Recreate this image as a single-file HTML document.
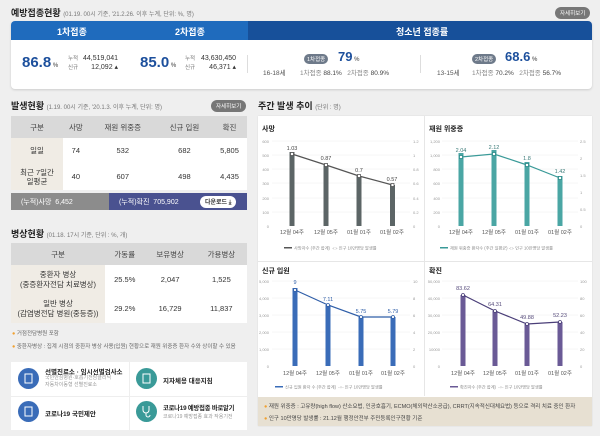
<!DOCTYPE html><html><head><meta charset="utf-8"><style>
*{margin:0;padding:0;box-sizing:border-box}
body{width:600px;height:436px;background:#efefef;font-family:"Liberation Sans","Noto Sans CJK KR",sans-serif;position:relative;overflow:hidden;color:#333}
.a{position:absolute;white-space:nowrap}
.t{font-weight:bold;font-size:9px;color:#222}
.s{font-size:6px;color:#777;font-weight:normal}
.btn{background:#777;color:#fff;font-size:5.5px;border-radius:6px;padding:2px 5px}
table{border-collapse:collapse;position:absolute;font-size:7.5px;text-align:center}
td{padding:0}
</style></head><body>
<div class="a t" style="left:11px;top:6px">예방접종현황 <span class="s">(01.19. 00시 기준, '21.2.26. 이후 누계, 단위: %, 명)</span></div>
<div class="a btn" style="left:555px;top:7px">자세히보기</div>
<div class="a" style="left:11px;top:21px;width:581px;height:68px;background:#fff;border-radius:4px;box-shadow:0 1px 2px #ccc"></div>
<div class="a" style="left:11px;top:21px;width:237px;height:19px;background:#1f6bbd;border-radius:4px 0 0 0"></div>
<div class="a" style="left:248px;top:21px;width:344px;height:19px;background:#17509a;border-radius:0 4px 0 0"></div>
<div class="a" style="left:57px;top:25px;color:#fff;font-size:9px;font-weight:bold">1차접종</div>
<div class="a" style="left:175px;top:25px;color:#fff;font-size:9px;font-weight:bold">2차접종</div>
<div class="a" style="left:396px;top:25px;color:#fff;font-size:9px;font-weight:bold">청소년 접종률</div>
<div class="a" style="left:22px;top:54px;color:#1c4f9c;font-size:15px;font-weight:bold">86.8<span style="font-size:6px;color:#777"> %</span></div>
<div class="a" style="left:68px;top:55px;font-size:5.5px;color:#777;line-height:9px">누적<br>신규</div>
<div class="a" style="left:83px;top:54px;font-size:7px;color:#333;line-height:9px;text-align:right">44,519,041<br>12,092 ▴</div>
<div class="a" style="left:140px;top:54px;color:#1c4f9c;font-size:15px;font-weight:bold">85.0<span style="font-size:6px;color:#777"> %</span></div>
<div class="a" style="left:185px;top:55px;font-size:5.5px;color:#777;line-height:9px">누적<br>신규</div>
<div class="a" style="left:201px;top:54px;font-size:7px;color:#333;line-height:9px;text-align:right">43,630,450<br>46,371 ▴</div>
<div class="a" style="left:247px;top:55px;width:1px;height:18px;background:#ddd"></div>
<div class="a" style="left:420px;top:55px;width:1px;height:18px;background:#ddd"></div>
<div class="a" style="left:263px;top:67px;font-size:6.5px;color:#555">16-18세</div>
<div class="a" style="left:304px;top:54px;background:#6e7a8a;color:#fff;font-size:5.5px;border-radius:5px;padding:1px 3px">1차접종</div>
<div class="a" style="left:338px;top:49px;color:#1c4f9c;font-size:13px;font-weight:bold">79<span style="font-size:6px;color:#777"> %</span></div>
<div class="a" style="left:300px;top:67px;font-size:6.5px;color:#888">1차접종 <span style="color:#444">88.1%</span> &nbsp; 2차접종 <span style="color:#444">80.9%</span></div>
<div class="a" style="left:437px;top:67px;font-size:6.5px;color:#555">13-15세</div>
<div class="a" style="left:472px;top:54px;background:#6e7a8a;color:#fff;font-size:5.5px;border-radius:5px;padding:1px 3px">2차접종</div>
<div class="a" style="left:505px;top:49px;color:#1c4f9c;font-size:13px;font-weight:bold">68.6<span style="font-size:6px;color:#777"> %</span></div>
<div class="a" style="left:472px;top:67px;font-size:6.5px;color:#888">1차접종 <span style="color:#444">70.2%</span> &nbsp; 2차접종 <span style="color:#444">56.7%</span></div>

<div class="a t" style="left:11px;top:99px">발생현황 <span class="s">(1.19. 00시 기준, '20.1.3. 이후 누계, 단위: 명)</span></div>
<div class="a btn" style="left:211px;top:100px">자세히보기</div>
<table style="left:11px;top:116px;width:236px">
<tr style="height:22px;background:#d9d9d9;color:#444"><td style="width:52px">구분</td><td>사망</td><td>재원 위중증</td><td>신규 입원</td><td>확진</td></tr>
<tr style="height:25px;background:#fff"><td style="background:#f0ece5">일일</td><td>74</td><td>532</td><td>682</td><td>5,805</td></tr>
<tr style="height:27px;background:#fff"><td style="background:#f0ece5;line-height:9px">최근 7일간<br>일평균</td><td>40</td><td>607</td><td>498</td><td>4,435</td></tr>
</table>
<div class="a" style="left:11px;top:193px;width:98px;height:17px;background:#8c8c8c;color:#fff;font-size:7px;padding:4px 0 0 10px">(누적)사망 &nbsp;6,452</div>
<div class="a" style="left:109px;top:193px;width:138px;height:17px;background:#4a5290;color:#fff;font-size:7px;padding:4px 0 0 10px">(누적)확진 &nbsp;705,902</div>
<div class="a" style="left:200px;top:196px;background:#fff;color:#333;font-size:6px;border-radius:6px;padding:1px 5px;font-weight:bold">다운로드 ⤓</div>

<div class="a t" style="left:11px;top:227px">병상현황 <span class="s">(01.18. 17시 기준, 단위 : %, 개)</span></div>
<table style="left:11px;top:243px;width:236px">
<tr style="height:22px;background:#d9d9d9;color:#444"><td style="width:94px">구분</td><td>가동률</td><td>보유병상</td><td>가용병상</td></tr>
<tr style="height:29px;background:#fff"><td style="background:#f0ece5;line-height:10px">중환자 병상<br>(중증환자전담 치료병상)</td><td>25.5%</td><td>2,047</td><td>1,525</td></tr>
<tr style="height:29px;background:#fff"><td style="background:#f0ece5;line-height:10px">일반 병상<br>(감염병전담 병원(중등증))</td><td>29.2%</td><td>16,729</td><td>11,837</td></tr>
</table>
<div class="a" style="left:12px;top:329px;font-size:5.5px;color:#666"><span style="color:#f0a030">●</span> 거점전담병원 포함</div>
<div class="a" style="left:12px;top:342px;font-size:5.5px;color:#666"><span style="color:#f0a030">●</span> 중환자병상 : 집계 시점의 중환자 병상 사용(입원) 현황으로 재원 위중증 환자 수와 상이할 수 있음</div>

<div class="a" style="left:11px;top:362px;width:236px;height:68px;background:#fff"></div>
<div class="a" style="left:129px;top:362px;width:1px;height:68px;background:#eee"></div>
<div class="a" style="left:11px;top:396px;width:236px;height:1px;background:#eee"></div>
<div class="a" style="left:18px;top:368px;width:21px;height:21px;border-radius:50%;background:#3a6cb8"></div>
<div class="a" style="left:136px;top:368px;width:21px;height:21px;border-radius:50%;background:#3a9a98"></div>
<div class="a" style="left:18px;top:401px;width:21px;height:21px;border-radius:50%;background:#3a6cb8"></div>
<div class="a" style="left:136px;top:401px;width:21px;height:21px;border-radius:50%;background:#3a9a98"></div>
<div class="a" style="left:45px;top:366px;font-size:6.5px;font-weight:bold;color:#222">선별진료소 · 임시선별검사소</div>
<div class="a" style="left:45px;top:375px;font-size:5px;color:#999;line-height:7px">국민안심병원·호흡기전담클리닉<br>자동차이동형 선별진료소</div>
<div class="a" style="left:163px;top:375px;font-size:6.5px;font-weight:bold;color:#222">지자체용 대응지침</div>
<div class="a" style="left:45px;top:408px;font-size:6.5px;font-weight:bold;color:#222">코로나19 국민제안</div>
<div class="a" style="left:163px;top:403px;font-size:6.3px;font-weight:bold;color:#222;letter-spacing:-0.2px">코로나19 예방접종 바로알기</div>
<div class="a" style="left:163px;top:413px;font-size:5px;color:#999">코로나19 예방접종 효과 작용기전</div>

<div class="a t" style="left:258px;top:99px">주간 발생 추이 <span class="s">(단위 : 명)</span></div>
<div class="a" style="left:258px;top:116px;width:334px;height:310px;background:#fff;box-shadow:0 0 1px #ccc"></div>
<div class="a" style="left:424px;top:116px;width:1px;height:280px;background:#e6e6e6"></div>
<div class="a" style="left:258px;top:261px;width:334px;height:1px;background:#e6e6e6"></div>
<div class="a" style="left:258px;top:397px;width:334px;height:29px;background:#e7e0d2"></div>
<div class="a" style="left:264px;top:402px;font-size:5.5px;color:#444"><span style="color:#f0a030">●</span> 재원 위중증 : 고유량(high flow) 산소요법, 인공호흡기, ECMO(체외막산소공급), CRRT(지속적신대체요법) 등으로 격리 치료 중인 환자</div>
<div class="a" style="left:264px;top:414px;font-size:5.5px;color:#444"><span style="color:#f0a030">●</span> 인구 10만명당 발생률 : 21.12월 행정안전부 주민등록인구현황 기준</div>

<svg class="a" style="left:0;top:0" width="600" height="436" font-family="Liberation Sans,Noto Sans CJK KR,sans-serif">
<g font-size="7" font-weight="bold" fill="#222"><text x="262" y="131">사망</text><text x="429" y="131">재원 위중증</text><text x="262" y="273">신규 입원</text><text x="429" y="273">확진</text></g>
<g stroke="#eee" stroke-width="0.5">
<line x1="272" x2="410" y1="141" y2="141"/><line x1="272" x2="410" y1="155" y2="155"/><line x1="272" x2="410" y1="169" y2="169"/><line x1="272" x2="410" y1="183" y2="183"/><line x1="272" x2="410" y1="198" y2="198"/><line x1="272" x2="410" y1="212" y2="212"/>
<line x1="442" x2="578" y1="141" y2="141"/><line x1="442" x2="578" y1="155" y2="155"/><line x1="442" x2="578" y1="169" y2="169"/><line x1="442" x2="578" y1="183" y2="183"/><line x1="442" x2="578" y1="198" y2="198"/><line x1="442" x2="578" y1="212" y2="212"/>
<line x1="272" x2="410" y1="281" y2="281"/><line x1="272" x2="410" y1="298" y2="298"/><line x1="272" x2="410" y1="315" y2="315"/><line x1="272" x2="410" y1="332" y2="332"/><line x1="272" x2="410" y1="349" y2="349"/>
<line x1="442" x2="578" y1="281" y2="281"/><line x1="442" x2="578" y1="298" y2="298"/><line x1="442" x2="578" y1="315" y2="315"/><line x1="442" x2="578" y1="332" y2="332"/><line x1="442" x2="578" y1="349" y2="349"/>
</g>
<g font-size="4" fill="#999" text-anchor="end">
<text x="269" y="143">600</text><text x="269" y="157">500</text><text x="269" y="171">400</text><text x="269" y="185">300</text><text x="269" y="200">200</text><text x="269" y="214">100</text><text x="269" y="228">0</text>
<text x="440" y="143">1,200</text><text x="440" y="157">1,000</text><text x="440" y="171">800</text><text x="440" y="185">600</text><text x="440" y="200">400</text><text x="440" y="214">200</text><text x="440" y="228">0</text>
<text x="269" y="283">5,000</text><text x="269" y="300">4,000</text><text x="269" y="317">3,000</text><text x="269" y="334">2,000</text><text x="269" y="351">1,000</text><text x="269" y="368">0</text>
<text x="440" y="283">50,000</text><text x="440" y="300">40,000</text><text x="440" y="317">30,000</text><text x="440" y="334">20,000</text><text x="440" y="351">10000</text><text x="440" y="368">0</text>
</g>
<g font-size="4" fill="#999">
<text x="413" y="143">1.2</text><text x="413" y="157">1</text><text x="413" y="171">0.8</text><text x="413" y="185">0.6</text><text x="413" y="200">0.4</text><text x="413" y="214">0.2</text><text x="413" y="228">0</text>
<text x="580" y="143">2.5</text><text x="580" y="160">2</text><text x="580" y="177">1.5</text><text x="580" y="194">1</text><text x="580" y="211">0.5</text><text x="580" y="228">0</text>
<text x="413" y="283">10</text><text x="413" y="300">8</text><text x="413" y="317">6</text><text x="413" y="334">4</text><text x="413" y="351">2</text><text x="413" y="368">0</text>
<text x="580" y="283">100</text><text x="580" y="300">80</text><text x="580" y="317">60</text><text x="580" y="334">40</text><text x="580" y="351">20</text><text x="580" y="368">0</text>
</g>
<g fill="#5c6566"><rect x="289.5" y="152" width="5" height="74"/><rect x="323.5" y="165" width="5" height="61"/><rect x="356.5" y="176" width="5" height="50"/><rect x="390" y="185" width="5" height="41"/></g>
<polyline points="292,154 326,165 359,176 392.5,185" fill="none" stroke="#555" stroke-width="1.2"/>
<g fill="#fff" stroke="#555" stroke-width="0.8"><rect x="290.5" y="152.5" width="3" height="3"/><rect x="324.5" y="163.5" width="3" height="3"/><rect x="357.5" y="174.5" width="3" height="3"/><rect x="391" y="183.5" width="3" height="3"/></g>
<g font-size="5.5" fill="#444" text-anchor="middle"><text x="292" y="150">1.03</text><text x="326" y="160">0.87</text><text x="359" y="172">0.7</text><text x="392" y="181">0.57</text></g>
<g fill="#4aa6a4"><rect x="458.5" y="153" width="5" height="73"/><rect x="491.5" y="150" width="5" height="76"/><rect x="524.5" y="162" width="5" height="64"/><rect x="557.5" y="176" width="5" height="50"/></g>
<polyline points="461,157 494,154 527,165 560,178" fill="none" stroke="#3a9a98" stroke-width="1.2"/>
<g fill="#fff" stroke="#2a8a88" stroke-width="0.8"><rect x="459.5" y="155.5" width="3" height="3"/><rect x="492.5" y="152.5" width="3" height="3"/><rect x="525.5" y="163.5" width="3" height="3"/><rect x="558.5" y="176.5" width="3" height="3"/></g>
<g font-size="5.5" fill="#3a7a78" text-anchor="middle"><text x="461" y="152">2.04</text><text x="494" y="149">2.12</text><text x="527" y="160">1.8</text><text x="560" y="173">1.42</text></g>
<g fill="#3a6cb8"><rect x="292.5" y="288" width="5" height="78"/><rect x="325.5" y="305" width="5" height="61"/><rect x="358.5" y="317" width="5" height="49"/><rect x="390.5" y="317" width="5" height="49"/></g>
<polyline points="295,290 328,305 361,317 393,317" fill="none" stroke="#2f5ea8" stroke-width="1.2"/>
<g fill="#fff" stroke="#2f5ea8" stroke-width="0.8"><circle cx="295" cy="290" r="1.5"/><circle cx="328" cy="305" r="1.5"/><circle cx="361" cy="317" r="1.5"/><circle cx="393" cy="317" r="1.5"/></g>
<g font-size="5.5" fill="#2f5ea8" text-anchor="middle"><text x="295" y="284">9</text><text x="328" y="301">7.11</text><text x="361" y="313">5.75</text><text x="393" y="313">5.79</text></g>
<g fill="#6a5a96"><rect x="460.5" y="295" width="5" height="71"/><rect x="492.5" y="311" width="5" height="55"/><rect x="524.5" y="324" width="5" height="42"/><rect x="557.5" y="322" width="5" height="44"/></g>
<polyline points="463,295 495,311 527,324 560,322" fill="none" stroke="#4a3e78" stroke-width="1.2"/>
<g fill="#fff" stroke="#4a3e78" stroke-width="0.8"><circle cx="463" cy="295" r="1.5"/><circle cx="495" cy="311" r="1.5"/><circle cx="527" cy="324" r="1.5"/><circle cx="560" cy="322" r="1.5"/></g>
<g font-size="5.5" fill="#554a7a" text-anchor="middle"><text x="463" y="290">83.62</text><text x="495" y="306">64.31</text><text x="527" y="319">49.88</text><text x="560" y="317">52.23</text></g>
<g font-size="5.5" fill="#555" text-anchor="middle">
<text x="292" y="234">12월 04주</text><text x="326" y="234">12월 05주</text><text x="359" y="234">01월 01주</text><text x="392" y="234">01월 02주</text>
<text x="461" y="234">12월 04주</text><text x="494" y="234">12월 05주</text><text x="527" y="234">01월 01주</text><text x="560" y="234">01월 02주</text>
<text x="295" y="375">12월 04주</text><text x="328" y="375">12월 05주</text><text x="361" y="375">01월 01주</text><text x="393" y="375">01월 02주</text>
<text x="463" y="375">12월 04주</text><text x="495" y="375">12월 05주</text><text x="527" y="375">01월 01주</text><text x="560" y="375">01월 02주</text>
</g>
<g font-size="4.2" fill="#888">
<rect x="284" y="247" width="8" height="1.5" fill="#555"/><text x="294" y="249.5">사망자수 (주간 합계) &#160;-□- 인구 10만명당 발생률</text>
<rect x="440" y="247" width="8" height="1.5" fill="#3a9a98"/><text x="450" y="249.5">재원 위중증 환자수 (주간 일평균) -□- 인구 10만명당 발생률</text>
<rect x="275" y="386" width="8" height="1.5" fill="#3a6cb8"/><text x="285" y="388.5">신규 입원 환자 수 (주간 합계) &#160;-○- 인구 10만명당 발생률</text>
<rect x="450" y="386" width="8" height="1.5" fill="#6a5a96"/><text x="460" y="388.5">확진자수 (주간 합계) &#160;-○- 인구 10만명당 발생률</text>
</g>
<g fill="none" stroke="#fff" stroke-width="1"><rect x="25" y="374" width="7" height="9"/><rect x="143" y="374" width="7" height="9"/><rect x="25" y="407" width="7" height="9"/><path d="M143 406v4a3 3 0 0 0 6 0v-4M146 413v2a2 2 0 0 0 4 0"/></g>
</svg>
</body></html>
